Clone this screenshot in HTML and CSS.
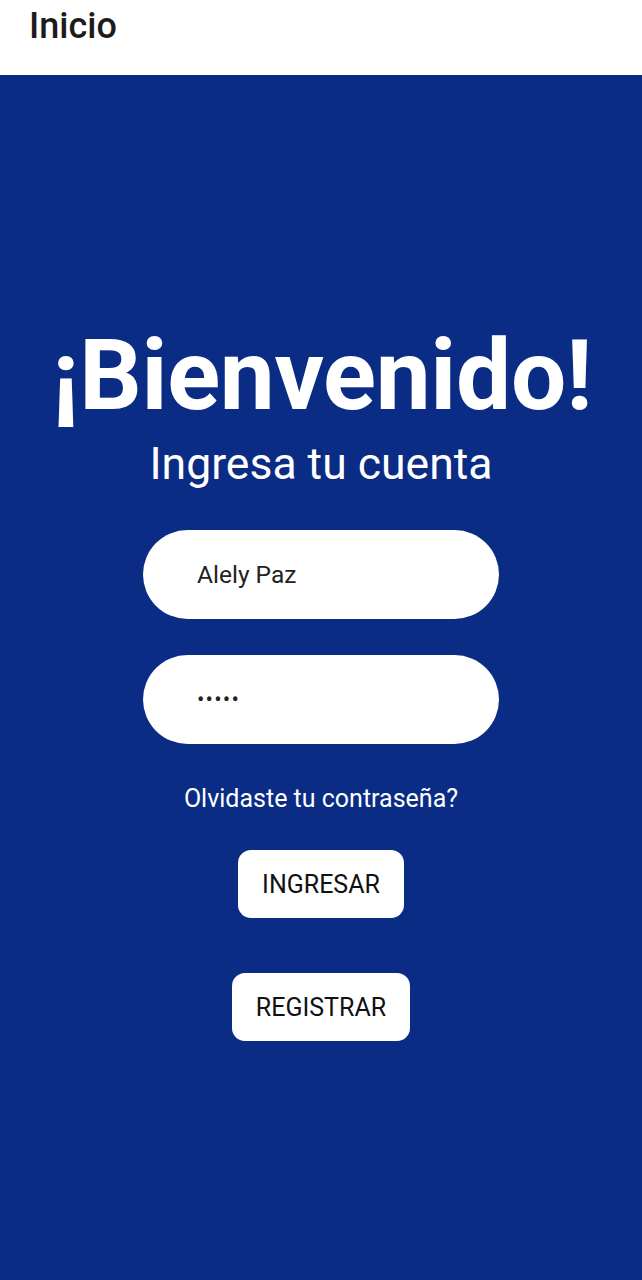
FILE: index.html
```html
<!DOCTYPE html>
<html lang="es">
<head>
<meta charset="utf-8">
<title>Inicio</title>
<link rel="stylesheet" href="styles.css">
</head>
<body>
<header class="appbar"><h1 class="appbar-title">Inicio</h1></header>
<main class="screen">
  <h2 class="welcome">¡Bienvenido!</h2>
  <p class="subtitle">Ingresa tu cuenta</p>
  <div class="field"><span class="field-text">Alely Paz</span></div>
  <div class="field"><span class="field-dots">•••••</span></div>
  <p class="forgot">Olvidaste tu contraseña?</p>
  <button class="btn btn-login">INGRESAR</button>
  <button class="btn btn-register">REGISTRAR</button>
</main>
</body>
</html>
```
FILE: styles.css
```css
* { box-sizing: border-box; }
html, body { margin: 0; padding: 0; }
body {
  width: 642px;
  height: 1280px;
  font-family: Roboto, "Noto Sans", sans-serif;
  background: #0a2c85;
  overflow: hidden;
}
.appbar {
  height: 75px;
  background: #ffffff;
  padding-left: 29px;
  display: flex;
  align-items: flex-start;
}
.appbar-title {
  margin: 0;
  margin-top: 4px;
  font-size: 36px;
  font-weight: 500;
  color: #1c1c1c;
  line-height: 44px;
}
.screen {
  display: flex;
  flex-direction: column;
  align-items: center;
  padding-top: 245px;
  color: #fff;
}
.welcome {
  margin: 0;
  font-size: 98px;
  font-weight: 700;
  line-height: 112px;
  letter-spacing: -0.3px;
  padding-left: 2px;
}
.subtitle {
  margin: 6px 0 0;
  font-size: 44.5px;
  line-height: 52px;
}
.field {
  width: 356px;
  height: 89px;
  border-radius: 45px;
  background: #fff;
  display: flex;
  align-items: center;
  padding-left: 54px;
  color: #222;
}
.subtitle + .field { margin-top: 40px; }
.field + .field { margin-top: 36px; }
.field-text { font-size: 24.5px; }
.field-dots { font-size: 22px; letter-spacing: 1.2px; line-height: 1; }
.forgot {
  margin: 40px 0 0;
  font-size: 25px;
  line-height: 30px;
}
.btn {
  font-family: Roboto, "Noto Sans", sans-serif;
  border: none;
  background: #fff;
  color: #111;
  height: 68px;
  border-radius: 13px;
  font-size: 25px;
  padding: 0 24px;
}
.btn-login { margin-top: 36px; }
.btn-register { margin-top: 55px; }
```
